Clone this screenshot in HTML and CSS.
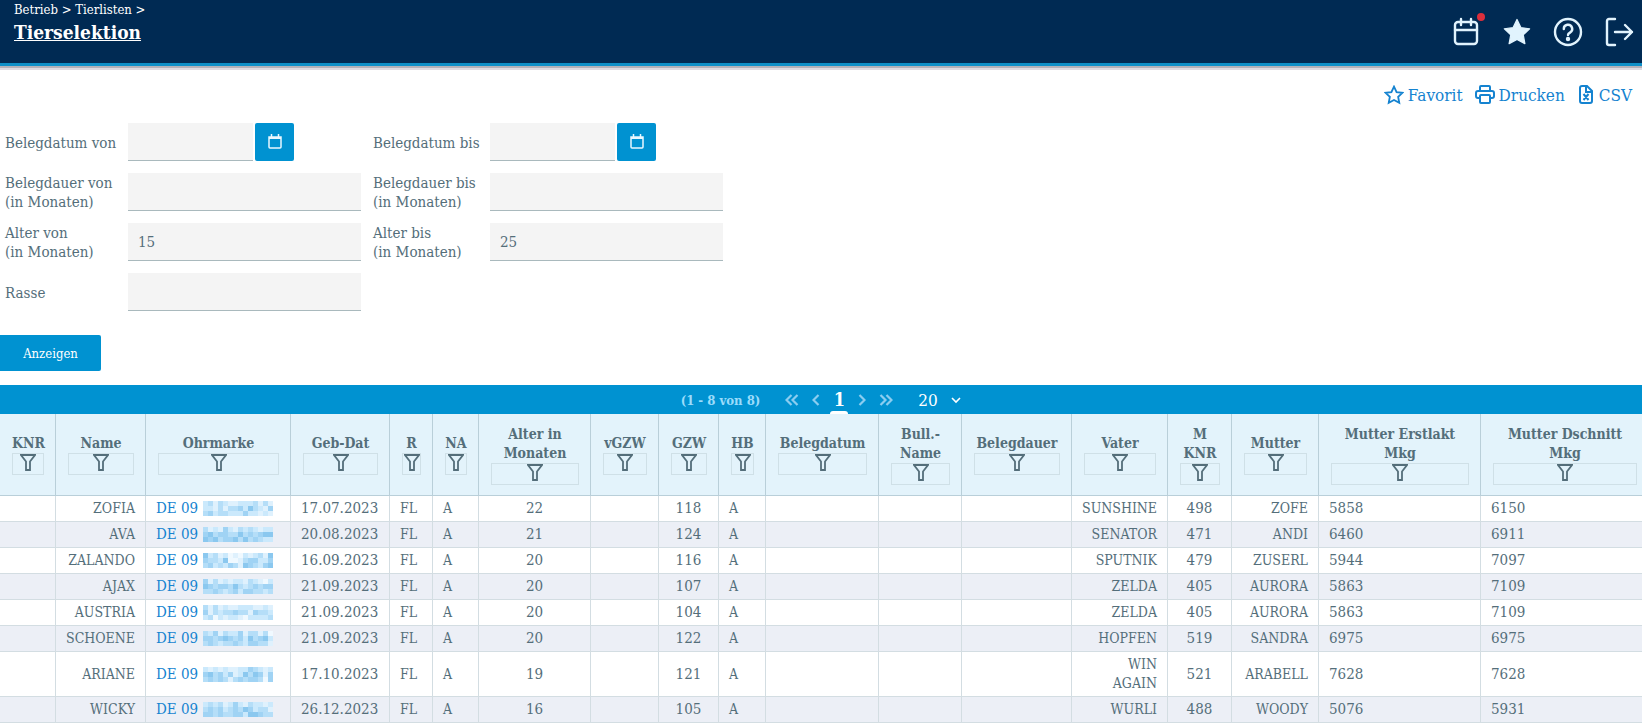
FILE: index.html
```html
<!DOCTYPE html>
<html lang="de">
<head>
    <meta charset="UTF-8">
    <meta name="viewport" content="width=device-width, initial-scale=1.0">
    <title>Tierselektion</title>
    <link rel="stylesheet" href="styles.css">
</head>
<body>

    <!-- Icons -->
    <svg class="icon-defs" aria-hidden="true">
        <symbol id="icon-kalender" viewBox="0 0 16 16">
            <path d="M2 3h12v10a1 1 0 0 1-1 1H3a1 1 0 0 1-1-1z" fill="none" stroke="currentColor" stroke-width="1.500"/>
            <path d="M2 3h12v2H2z" fill="currentColor"/>
            <path d="M4.500 0v3M11.500 0v3" stroke="currentColor" stroke-width="1.500"/>
        </symbol>
        <symbol id="icon-filter" viewBox="0 1 16 17">
            <path d="M1 2h14l-5 6.500V17H6V8.500z" fill="none" stroke="currentColor" stroke-width="1.800"/>
        </symbol>
        <symbol id="icon-stern" viewBox="0 0 24 24">
            <path d="M12 2l3.100 6.500 7 .9-5.100 4.900 1.300 7L12 17.900l-6.300 3.400 1.300-7L1.900 9.400l7-.9z"/>
        </symbol>
        <symbol id="icon-links" viewBox="0 0 8 12">
            <path d="M6.500 1L1.500 6l5 5" fill="none" stroke="currentColor" stroke-width="2.200"/>
        </symbol>
        <symbol id="icon-doppelt" viewBox="0 0 14 12">
            <path d="M6.500 1L1.500 6l5 5M12.500 1l-5 5 5 5" fill="none" stroke="currentColor" stroke-width="2.200"/>
        </symbol>
    </svg>

    <header class="kopf">
        <div class="pfad">
            <nav class="pfad-links"><a href="#">Betrieb</a> &gt; <a href="#">Tierlisten</a> &gt;</nav>
            <h1><a href="#">Tierselektion</a></h1>
        </div>
        <div class="kopf-icons">
            <a href="#" class="termine" aria-label="Termine">
                <svg width="30" height="30" viewBox="0 0 30 30" fill="none" stroke="currentColor" stroke-width="2.400" stroke-linecap="round"><rect x="4" y="5" width="22" height="22" rx="3"/><path d="M4 13h22M10 2v6M20 2v6"/></svg>
                <span class="punkt"></span>
            </a>
            <a href="#" aria-label="Favoriten">
                <svg width="30" height="30" fill="currentColor" stroke="currentColor" stroke-linejoin="round"><use href="#icon-stern"/></svg>
            </a>
            <a href="#" aria-label="Hilfe">
                <svg width="30" height="30" viewBox="0 0 30 30" fill="none" stroke="currentColor" stroke-width="2.400" stroke-linecap="round"><circle cx="15" cy="15" r="13"/><path d="M10.800 12a4.200 4.200 0 1 1 6.200 3.600c-1.500.8-2 1.400-2 2.400"/><circle cx="15" cy="22" r="1" fill="currentColor"/></svg>
            </a>
            <a href="#" aria-label="Abmelden">
                <svg width="30" height="30" viewBox="0 0 30 30" fill="none" stroke="currentColor" stroke-width="2.400" stroke-linecap="round" stroke-linejoin="round"><path d="M11 2H5a2 2 0 0 0-2 2v22a2 2 0 0 0 2 2h6M11 15h17M21 8l7 7-7 7"/></svg>
            </a>
        </div>
    </header>

    <main>
        <div class="aktionen">
            <a href="#">
                <svg width="20" height="20" fill="none" stroke="currentColor" stroke-width="2.200"><use href="#icon-stern"/></svg>
                Favorit
            </a>
            <a href="#">
                <svg width="20" height="20" viewBox="0 0 20 20" fill="none" stroke="currentColor" stroke-width="2"><path d="M5 6V2a1 1 0 0 1 1-1h8a1 1 0 0 1 1 1v4M5 13H3a2 2 0 0 1-2-2V8a2 2 0 0 1 2-2h14a2 2 0 0 1 2 2v3a2 2 0 0 1-2 2h-2"/><rect x="5" y="10" width="10" height="8" rx="1"/></svg>
                Drucken
            </a>
            <a href="#">
                <svg width="18" height="20" viewBox="0 0 18 20" fill="none" stroke="currentColor" stroke-width="2"><path d="M10 1H5a2 2 0 0 0-2 2v13a2 2 0 0 0 2 2h8a2 2 0 0 0 2-2V6zM9 1v6h6M6.500 9l5 6M11.500 9l-5 6"/></svg>
                CSV
            </a>
        </div>

        <form class="suche" onsubmit="return false">
            <div class="felder">
                <label for="belegdatumVon">Belegdatum von</label>
                <div class="datum">
                    <input type="text" id="belegdatumVon">
                    <button type="button" aria-label="Kalender öffnen"><svg width="16" height="16"><use href="#icon-kalender"/></svg></button>
                </div>
                <label for="belegdatumBis">Belegdatum bis</label>
                <div class="datum">
                    <input type="text" id="belegdatumBis">
                    <button type="button" aria-label="Kalender öffnen"><svg width="16" height="16"><use href="#icon-kalender"/></svg></button>
                </div>

                <label for="belegdauerVon">Belegdauer von<br>(in Monaten)</label>
                <input type="text" id="belegdauerVon">
                <label for="belegdauerBis">Belegdauer bis<br>(in Monaten)</label>
                <input type="text" id="belegdauerBis">

                <label for="alterVon">Alter von<br>(in Monaten)</label>
                <input type="text" id="alterVon" value="15">
                <label for="alterBis">Alter bis<br>(in Monaten)</label>
                <input type="text" id="alterBis" value="25">

                <label for="rasse">Rasse</label>
                <input type="text" id="rasse">
            </div>
            <button type="submit" class="anzeigen">Anzeigen</button>
        </form>

        <div class="blaettern">
            <span class="anzahl">(1 - 8 von 8)</span>
            <div class="seiten">
                <button type="button" aria-label="Erste Seite"><svg width="14" height="12"><use href="#icon-doppelt"/></svg></button>
                <button type="button" aria-label="Vorherige Seite"><svg width="8" height="12"><use href="#icon-links"/></svg></button>
                <button type="button" class="aktiv">1</button>
                <button type="button" class="vor" aria-label="Nächste Seite"><svg width="8" height="12"><use href="#icon-links"/></svg></button>
                <button type="button" class="vor" aria-label="Letzte Seite"><svg width="14" height="12"><use href="#icon-doppelt"/></svg></button>
            </div>
            <div class="pro-seite">
                <select aria-label="Zeilen pro Seite"><option>20</option><option>50</option></select>
                <svg width="10" height="7" viewBox="0 0 10 7" fill="none" stroke="currentColor" stroke-width="1.600"><path d="M1 1l4 4 4-4"/></svg>
            </div>
        </div>

        <table class="tiere">
            <colgroup>
                <col class="b56"><col class="b90"><col class="b145"><col class="b99"><col class="b43"><col class="b46">
                <col class="b112"><col class="b68"><col class="b60"><col class="b47"><col class="b113"><col class="b83">
                <col class="b110"><col class="b96"><col class="b64"><col class="b87"><col class="b162"><col>
            </colgroup>
            <thead>
                <tr>
                    <th>KNR</th><th>Name</th><th>Ohrmarke</th><th>Geb-Dat</th><th>R</th><th>NA</th>
                    <th>Alter in Monaten</th><th>vGZW</th><th>GZW</th><th>HB</th><th>Belegdatum</th><th>Bull.-<br>Name</th>
                    <th>Belegdauer</th><th>Vater</th><th>M KNR</th><th>Mutter</th><th>Mutter Erstlakt Mkg</th><th>Mutter Dschnitt Mkg</th>
                </tr>
            </thead>
            <tbody id="tiere"></tbody>
        </table>
    </main>

    <script src="script.js"></script>
</body>
</html>
```

FILE: styles.css
```css
* {
    box-sizing: border-box;
}

body {
    margin: 0;
    background-color: #fff;
    color: #546e7a;
    font-family: "DejaVu Serif Condensed", "DejaVu Serif", serif;
    font-size: 15px;
    line-height: 19px;
}

a {
    color: #1583d0;
    text-decoration: none;
}

button, input, select {
    font-family: inherit;
    color: inherit;
}

button {
    border: none;
    cursor: pointer;
}

svg {
    display: block;
    flex: none;
}

.icon-defs {
    position: absolute;
    width: 0;
    height: 0;
}

/* Kopfzeile */
.kopf {
    display: flex;
    justify-content: space-between;
    height: 66px;
    padding: 0 8px 0 14px;
    background-color: #002a53;
    border-bottom: 3px solid #0d8fc8;
    box-shadow: 0 2px 0 #b3b1b9, 0 4px 0 #dcdae1;
    color: #fff;
}

.kopf a {
    color: inherit;
}

.pfad-links {
    font-size: 13px;
    line-height: 20px;
}

.kopf h1 {
    margin: 0;
    font-size: 19px;
    line-height: 25px;
}

.kopf h1 a {
    text-decoration: underline;
}

.kopf-icons {
    display: flex;
    align-items: center;
    gap: 21px;
    color: #e1f3fd;
}

.termine {
    position: relative;
}

.punkt {
    position: absolute;
    top: -4px;
    right: -4px;
    width: 8px;
    height: 8px;
    border-radius: 50%;
    background-color: #dc2f3c;
}

/* Aktionen */
.aktionen {
    display: flex;
    justify-content: flex-end;
    gap: 12px;
    padding: 19px 10px 18px;
    font-size: 17px;
}

.aktionen a {
    display: flex;
    align-items: center;
    gap: 4px;
}

/* Suchformular */
.felder {
    display: grid;
    grid-template-columns: 111px 233px 105px 233px;
    grid-auto-rows: 38px;
    gap: 12px;
    align-items: center;
    padding-left: 5px;
}

.felder label {
    padding-top: 2px;
    white-space: nowrap;
}

.suche input {
    width: 100%;
    height: 38px;
    padding: 0 10px;
    border: none;
    border-bottom: 1px solid #a9b9bd;
    background-color: #f4f4f4;
    font-size: 15px;
}

.datum {
    display: flex;
    gap: 2px;
}

.datum input {
    width: 125px;
}

.datum button {
    display: flex;
    align-items: center;
    justify-content: center;
    width: 39px;
    height: 38px;
    padding: 0;
    border-radius: 2px;
    background-color: #0092d1;
    color: #e8f8ff;
}

.anzeigen {
    display: block;
    width: 101px;
    height: 36px;
    margin: 24px 0 14px;
    border-radius: 0 2px 2px 0;
    background-color: #0092d1;
    color: #fff;
    font-size: 13px;
}

.suche .anzeigen {
    color: #fff;
}

/* Blättern */
.blaettern {
    display: flex;
    justify-content: center;
    align-items: center;
    gap: 25px;
    height: 29px;
    background-color: #0092d1;
    color: #fff;
}

.blaettern button {
    display: flex;
    align-items: center;
    justify-content: center;
    height: 29px;
    padding: 0;
    background: none;
    color: #8bcdf0;
}

.anzahl {
    padding-top: 2px;
    color: #9bdcfb;
    font-size: 13px;
    font-weight: bold;
}

.seiten {
    display: flex;
    gap: 13px;
}

.blaettern .aktiv {
    position: relative;
    width: 12px;
    color: #fff;
    font-size: 18px;
    font-weight: bold;
}

.aktiv::after {
    content: "";
    position: absolute;
    bottom: 0;
    left: -3px;
    width: 18px;
    height: 3px;
    border-radius: 4px 4px 0 0;
    background-color: #fff;
}

.vor svg {
    transform: rotate(180deg);
}

.pro-seite {
    position: relative;
}

.pro-seite select {
    display: block;
    width: 43px;
    height: 29px;
    padding: 0;
    border: none;
    background: none;
    appearance: none;
    font-size: 17px;
}

.pro-seite option {
    color: #546e7a;
}

.pro-seite svg {
    position: absolute;
    top: 12px;
    right: 0;
    pointer-events: none;
}

/* Tabelle */
.tiere {
    width: 100%;
    table-layout: fixed;
    border-collapse: separate;
    border-spacing: 0;
    font-size: 14px;
}

.b43 { width: 43px; }
.b46 { width: 46px; }
.b47 { width: 47px; }
.b56 { width: 56px; }
.b60 { width: 60px; }
.b64 { width: 64px; }
.b68 { width: 68px; }
.b83 { width: 83px; }
.b87 { width: 87px; }
.b90 { width: 90px; }
.b96 { width: 96px; }
.b99 { width: 99px; }
.b110 { width: 110px; }
.b112 { width: 112px; }
.b113 { width: 113px; }
.b145 { width: 145px; }
.b162 { width: 162px; }

.tiere th {
    height: 82px;
    padding: 0 11px 0 12px;
    background-color: #e3f3fb;
    border-right: 1px solid #b9cfd9;
    border-bottom: 1px solid #b9cfd9;
    vertical-align: middle;
}

.tiere th:last-child {
    padding-right: 5px;
}

.filter {
    display: flex;
    justify-content: center;
    width: 100%;
    height: 22px;
    padding: 0;
    border: 1px solid #cfe0e7;
    background: none;
    color: #546e7a;
}

.tiere td {
    padding: 3px 10px;
    border-right: 1px solid #d3dde2;
    border-bottom: 1px solid #d3dde2;
}

.tiere th:last-child,
.tiere td:last-child {
    border-right: none;
}

.tiere tbody tr:nth-child(even) {
    background-color: #eceff6;
}

.tiere .rechts {
    text-align: right;
}

.tiere .mitte {
    text-align: center;
}

.tiere .zahl,
.ohrmarke {
    font-size: 15px;
}

.ohrmarke {
    display: flex;
    align-items: center;
    gap: 5px;
    white-space: nowrap;
}
```

FILE: script.js
```javascript
// Spalten: KNR, Name, Ohrmarke, Geb-Dat, R, NA, Alter, vGZW, GZW, HB, Belegdatum, Bull.-Name, Belegdauer, Vater, M KNR, Mutter, Erstlakt, Dschnitt
const tiere = [
    ['', 'ZOFIA', 'DE 09', '17.07.2023', 'FL', 'A', '22', '', '118', 'A', '', '', '', 'SUNSHINE', '498', 'ZOFE', '5858', '6150'],
    ['', 'AVA', 'DE 09', '20.08.2023', 'FL', 'A', '21', '', '124', 'A', '', '', '', 'SENATOR', '471', 'ANDI', '6460', '6911'],
    ['', 'ZALANDO', 'DE 09', '16.09.2023', 'FL', 'A', '20', '', '116', 'A', '', '', '', 'SPUTNIK', '479', 'ZUSERL', '5944', '7097'],
    ['', 'AJAX', 'DE 09', '21.09.2023', 'FL', 'A', '20', '', '107', 'A', '', '', '', 'ZELDA', '405', 'AURORA', '5863', '7109'],
    ['', 'AUSTRIA', 'DE 09', '21.09.2023', 'FL', 'A', '20', '', '104', 'A', '', '', '', 'ZELDA', '405', 'AURORA', '5863', '7109'],
    ['', 'SCHOENE', 'DE 09', '21.09.2023', 'FL', 'A', '20', '', '122', 'A', '', '', '', 'HOPFEN', '519', 'SANDRA', '6975', '6975'],
    ['', 'ARIANE', 'DE 09', '17.10.2023', 'FL', 'A', '19', '', '121', 'A', '', '', '', 'WIN AGAIN', '521', 'ARABELL', '7628', '7628'],
    ['', 'WICKY', 'DE 09', '26.12.2023', 'FL', 'A', '16', '', '105', 'A', '', '', '', 'WURLI', '488', 'WOODY', '5076', '5931']
];

const klassen = {
    1: 'rechts', 3: 'zahl', 6: 'zahl mitte', 8: 'zahl mitte', 13: 'rechts',
    14: 'zahl mitte', 15: 'rechts', 16: 'zahl', 17: 'zahl'
};

// Verpixelte Ohrmarken: je Tier drei Zeilen mit 14 Farbstufen
const farben = ['#f0f9ff', '#dff1fd', '#cbe9fc', '#b5def8', '#a0d3f4', '#8bc8ef'];
const muster = [
    ['23132112223131', '22131334253214', '34233222422121'],
    ['31214213232122', '45344335343455', '54534453534322'],
    ['52312010212315', '43325001344224', '34232431543245'],
    ['41312122132102', '54344353234344', '33432342443323'],
    ['31312112221121', '41323343314332', '23021221022223'],
    ['32413224133130', '44345434253452', '34323343244331'],
    ['21212112243212', '45342412535414', '34343134344304'],
    ['23231242132212', '34342343542331', '44343344255433']
];

function pixel(zeilen) {
    let rechtecke = '';
    zeilen.forEach((zeile, y) => {
        [...zeile].forEach((stufe, x) => {
            rechtecke += `<rect x="${x * 5}" y="${y * 5}" width="5" height="5" fill="${farben[stufe]}"/>`;
        });
    });
    return `<svg width="70" height="15" aria-hidden="true">${rechtecke}</svg>`;
}

document.getElementById('tiere').innerHTML = tiere.map((tier, i) => {
    const zellen = tier.map((wert, spalte) => {
        if (spalte === 2) {
            return `<td><div class="ohrmarke"><a href="#">${wert}</a>${pixel(muster[i])}</div></td>`;
        }
        return `<td class="${klassen[spalte] || ''}">${wert}</td>`;
    });
    return `<tr>${zellen.join('')}</tr>`;
}).join('');

// Filterknopf unter jede Spaltenüberschrift
document.querySelectorAll('.tiere th').forEach((th) => {
    const name = th.textContent;
    th.insertAdjacentHTML('beforeend', `<button type="button" class="filter" aria-label="${name} filtern"><svg width="16" height="17"><use href="#icon-filter"/></svg></button>`);
});
```
